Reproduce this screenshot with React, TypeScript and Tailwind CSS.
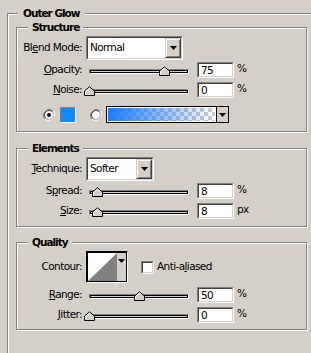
import React from 'react';

const face = "font-[family-name:'DejaVu_Sans',sans-serif] text-[10.5px] tracking-[-0.6px] text-black";

function Arrow() {
  return (
    <svg width="7" height="4" viewBox="0 0 7 4">
      <path d="M0 0H7L3.5 4Z" fill="#000" />
    </svg>
  );
}

function Sunken({ className, children }: { className: string; children?: React.ReactNode }) {
  return (
    <div className={`border border-t-[#808080] border-l-[#808080] border-b-white border-r-white ${className}`}>
      <div className="flex h-full w-full border border-t-[#404040] border-l-[#404040] border-b-[#d4d0c8] border-r-[#d4d0c8] bg-white">
        {children}
      </div>
    </div>
  );
}

function Select({ value, width }: { value: string; width: string }) {
  return (
    <Sunken className={`ml-[4px] h-[24px] ${width}`}>
      <span className="flex flex-1 items-center pl-[2px]">{value}</span>
      <div className="flex w-[16px] items-center justify-center border border-t-[#d4d0c8] border-l-[#d4d0c8] border-b-[#404040] border-r-[#404040] bg-[#d4d0c8] shadow-[inset_1px_1px_0_#fff,inset_-1px_-1px_0_#808080]">
        <Arrow />
      </div>
    </Sunken>
  );
}

function Label({ children }: { children: React.ReactNode }) {
  return <span className="w-[65px] shrink-0 text-right">{children}</span>;
}

function Thumb() {
  return (
    <svg width="11" height="10" viewBox="0 0 11 10">
      <path d="M0.5 9.5V5L5.5 0.8L10.5 5V9.5Z" fill="#d4d0c8" stroke="#000" />
      <path d="M1.5 8.5V5.4L5.5 2" fill="none" stroke="#fff" />
    </svg>
  );
}

function SliderRow({ label, value, unit, mt }: { label: React.ReactNode; value: number; unit: string; mt: string }) {
  return (
    <div className={`flex h-[16px] items-center ${mt}`}>
      <Label>{label}</Label>
      <div className="relative ml-[7px] h-[16px] w-[100px]">
        <div className="mt-[7px] h-[5px] border border-t-[#808080] border-l-[#808080] border-b-white border-r-white">
          <div className="h-[3px] border border-black bg-[#d4d0c8]" />
        </div>
        <div className="absolute top-[4px]" style={{ left: value - 5 }}>
          <Thumb />
        </div>
      </div>
      <Sunken className="ml-[8px] h-[16px] w-[37px]">
        <span className="flex items-center pl-[2px] leading-none">{value}</span>
      </Sunken>
      <span className="ml-[3px] self-start leading-[12px]">{unit}</span>
    </div>
  );
}

function Radio({ checked }: { checked?: boolean }) {
  return (
    <svg width="12" height="12" viewBox="0 0 12 12">
      <path d="M10.2 1.8A6 6 0 0 0 1.8 10.2" fill="none" stroke="#808080" />
      <path d="M1.8 10.2A6 6 0 0 0 10.2 1.8" fill="none" stroke="#fff" />
      <circle cx="6" cy="6" r="4.5" fill="#fff" stroke="#404040" strokeWidth="1" />
      <path d="M9.2 2.8A4.5 4.5 0 0 1 2.8 9.2" fill="none" stroke="#d4d0c8" />
      {checked && <circle cx="6" cy="6" r="2" fill="#000" />}
    </svg>
  );
}

function Group({ title, titleLeft, className, children }: { title: string; titleLeft: string; className: string; children: React.ReactNode }) {
  return (
    <div className={`relative w-[291px] border border-[#808080] shadow-[inset_1px_1px_0_#fff,1px_1px_0_#fff] ${className}`}>
      <span className={`absolute -top-[8px] bg-[#d4d0c8] px-[4px] font-bold leading-[14px] tracking-[-1px] ${titleLeft}`}>{title}</span>
      {children}
    </div>
  );
}

export default function App() {
  return (
    <div className={`h-[353px] w-[311px] overflow-hidden bg-[#d4d0c8] pl-[7px] pt-[13px] ${face}`}>
      <div className="relative h-[400px] w-[330px] border-l border-t border-[#808080] pl-[8px] pt-[13px] shadow-[inset_1px_1px_0_#fff]">
        <span className="absolute -top-[8px] left-[10px] bg-[#d4d0c8] px-[5px] font-bold leading-[14px] tracking-[-1px]">Outer Glow</span>

        <Group title="Structure" titleLeft="left-[11px]" className="pb-[8px] pt-[8px]">
          <div className="flex h-[24px] items-center">
            <Label>Bl<u>e</u>nd Mode:</Label>
            <Select value="Normal" width="w-[97px]" />
          </div>
          <SliderRow label={<><u>O</u>pacity:</>} value={75} unit="%" mt="mt-[2px]" />
          <SliderRow label={<><u>N</u>oise:</>} value={0} unit="%" mt="mt-[4px]" />
          <div className="mt-[8px] flex h-[17px] items-center">
            <div className="ml-[26px]"><Radio checked /></div>
            <div className="ml-[5px] h-[16px] w-[16px] border border-t-[#808080] border-l-[#808080] border-b-white border-r-white bg-[#1089ff]" />
            <div className="ml-[14px]"><Radio /></div>
            <div className="ml-[4px] flex h-[17px] w-[123px] border border-black bg-white">
              <div className="m-[1px] flex-1 bg-[conic-gradient(#cccccc_25%,#ffffff_0_50%,#cccccc_0_75%,#ffffff_0)] bg-[length:8px_8px]">
                <div className="h-full w-full bg-[linear-gradient(to_right,#1a7cff,rgba(26,124,255,0))]" />
              </div>
              <div className="flex w-[12px] items-center justify-center border-l border-black bg-[#d4d0c8]">
                <Arrow />
              </div>
            </div>
          </div>
        </Group>

        <Group title="Elements" titleLeft="left-[11px]" className="mt-[16px] pb-[7px] pt-[8px]">
          <div className="flex h-[24px] items-center">
            <Label><u>T</u>echnique:</Label>
            <Select value="Softer" width="w-[68px]" />
          </div>
          <SliderRow label={<>S<u>p</u>read:</>} value={8} unit="%" mt="mt-[2px]" />
          <SliderRow label={<><u>S</u>ize:</>} value={8} unit="px" mt="mt-[4px]" />
        </Group>

        <Group title="Quality" titleLeft="left-[11px]" className="mt-[15px] pb-[6px] pt-[8px]">
          <div className="flex h-[32px] items-center">
            <Label>Contour:</Label>
            <div className="ml-[4px] flex h-[32px] w-[42px] border border-t-black border-l-black border-b-white border-r-white">
              <div className="flex flex-1 border border-t-black border-l-black border-b-black border-r-black bg-[#d4d0c8]">
                <svg width="29" height="28" viewBox="0 0 29 28" className="shrink-0">
                  <rect width="29" height="28" fill="#fff" />
                  <path d="M0 28L29 0V28Z" fill="#808080" />
                </svg>
                <div className="flex flex-1 justify-center pt-[6px]">
                  <Arrow />
                </div>
              </div>
            </div>
            <Sunken className="ml-[13px] h-[13px] w-[13px]" />
            <span className="ml-[3px]">Anti-a<u>l</u>iased</span>
          </div>
          <SliderRow label={<><u>R</u>ange:</>} value={50} unit="%" mt="mt-[4px]" />
          <SliderRow label={<><u>J</u>itter:</>} value={0} unit="%" mt="mt-[4px]" />
        </Group>
      </div>
    </div>
  );
}
